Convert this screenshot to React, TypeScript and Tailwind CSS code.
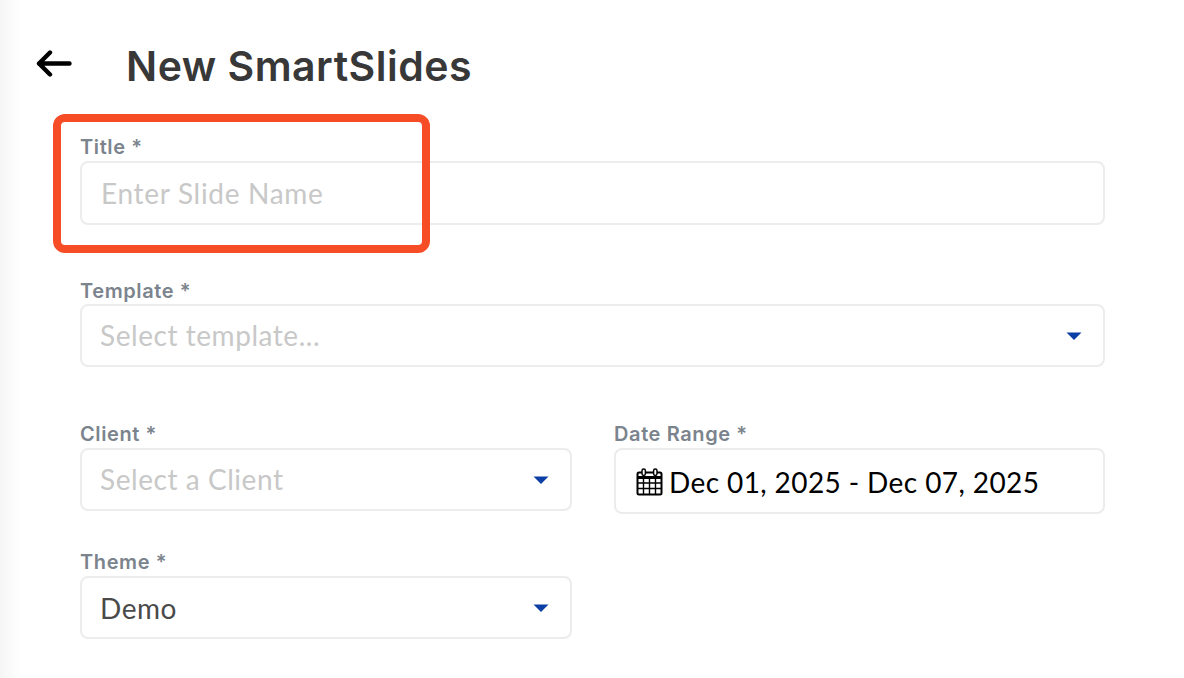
import React from "react";

const font = { fontFamily: "Lato, 'Noto Sans', sans-serif" };
const heading = { fontFamily: "Inter, Lato, sans-serif" };

function Caret() {
  return (
    <svg width="16" height="10" viewBox="0 0 16 10" className="shrink-0">
      <path d="M0.5 1.5 H15.5 L8 9 Z" fill="#0b3fa6" />
    </svg>
  );
}

function Label({ children }: { children: React.ReactNode }) {
  return <div className="h-[24px] text-[20px] leading-[24px] font-semibold tracking-[0.6px] text-[#7b848d]" style={heading}>{children}</div>;
}

function Select({ value, placeholder }: { value?: string; placeholder?: string }) {
  return (
    <div className="flex h-[63px] items-center justify-between rounded-[8px] border-2 border-[#ececec] bg-white pl-[18px] pr-[21px]">
      <span className={`text-[28px] leading-none tracking-[0.55px] ${value ? "pb-0 text-[#4a4a4a]" : "pb-[2px] text-[#c8c8c8]"}`}>{value ?? placeholder}</span>
      <Caret />
    </div>
  );
}

function CalendarIcon() {
  return (
    <svg width="27" height="28" viewBox="0 0 27 28" fill="none" stroke="#000" className="shrink-0">
      <rect x="1.5" y="4.5" width="24" height="22" rx="1.5" strokeWidth="2" />
      <path d="M1.5 9.5H25.5" strokeWidth="3" />
      <path d="M1.5 15H25.5M1.5 20.5H25.5M7.5 10V26M13.5 10V26M19.5 10V26" strokeWidth="1.4" />
      <rect x="6" y="1" width="3.4" height="6.5" rx="1.7" fill="#fff" strokeWidth="1.5" />
      <rect x="17.6" y="1" width="3.4" height="6.5" rx="1.7" fill="#fff" strokeWidth="1.5" />
    </svg>
  );
}

export default function App() {
  return (
    <div className="relative h-[678px] w-[1184px] overflow-hidden bg-white" style={font}>
      <div className="absolute inset-y-0 left-0 w-[22px] bg-gradient-to-r from-[#f6f6f6] to-white" />
      <div className="relative">
        <div className="flex h-[114px] items-start pl-[36px] pt-[42px]">
          <svg width="38" height="44" viewBox="0 0 38 44" fill="none" stroke="#000" strokeWidth="4.4" strokeLinecap="round" strokeLinejoin="round" className="shrink-0">
            <path d="M33.5 21.5H3M14 10.5 3 21.5l11 11" />
          </svg>
          <h1 className="ml-[52px] text-[41px] leading-[48px] font-semibold tracking-[0.5px] text-[#383838]" style={heading}>New SmartSlides</h1>
        </div>

        <div className="w-[1105px] pl-[80px] pt-[21px]">
          <Label>Title *</Label>
          <div className="mt-[2px] flex h-[64px] items-center rounded-[8px] border-2 border-[#ececec] bg-white pl-[19px]">
            <span className="text-[28px] leading-none tracking-[0.7px] text-[#c8c8c8]">Enter Slide Name</span>
          </div>

          <div className="mt-[54px]">
            <Label>Template *</Label>
            <div className="mt-[1px]"><Select placeholder="Select template..." /></div>
          </div>

          <div className="mt-[55px] grid grid-cols-[492px_491px] gap-x-[42px]">
            <div>
              <Label>Client *</Label>
              <div className="mt-[2px]"><Select placeholder="Select a Client" /></div>
            </div>
            <div>
              <Label>Date Range *</Label>
              <div className="mt-[2px] flex h-[66px] items-center gap-[6px] rounded-[8px] border-2 border-[#ececec] bg-white pl-[20px] pt-[2px]">
                <CalendarIcon />
                <span className="text-[28px] leading-none tracking-[0.4px] text-black">Dec 01, 2025 - Dec 07, 2025</span>
              </div>
            </div>
            <div className="mt-[36px]">
              <Label>Theme *</Label>
              <div className="mt-[2px]"><Select value="Demo" /></div>
            </div>
          </div>
        </div>
      </div>

      <div className="absolute left-[53px] top-[114px] h-[139px] w-[377px] rounded-[12px] border-[8px] border-[#f64d27]" />
    </div>
  );
}
